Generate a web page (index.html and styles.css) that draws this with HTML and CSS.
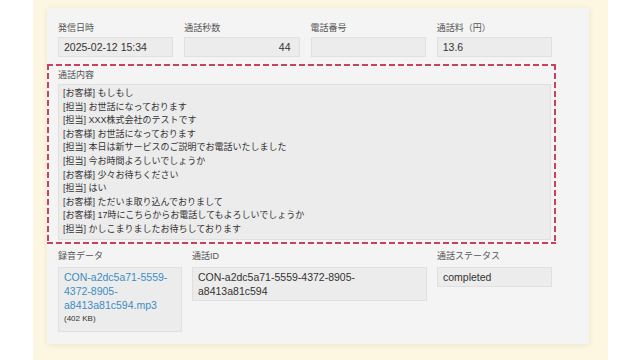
FILE: index.html
```html
<!DOCTYPE html>
<html lang="ja">
<head>
    <meta charset="UTF-8">
    <title>通話詳細</title>
    <link rel="stylesheet" href="styles.css">
</head>
<body>
    <div class="frame">
        <div class="card">
            <div class="row row-top">
                <div class="field">
                    <div class="label">発信日時</div>
                    <div class="value">2025-02-12 15:34</div>
                </div>
                <div class="field">
                    <div class="label">通話秒数</div>
                    <div class="value num">44</div>
                </div>
                <div class="field">
                    <div class="label">電話番号</div>
                    <div class="value"></div>
                </div>
                <div class="field">
                    <div class="label">通話料（円）</div>
                    <div class="value">13.6</div>
                </div>
            </div>

            <div class="highlight">
                <div class="label">通話内容</div>
                <div class="transcript">
                    <div>[お客様] もしもし</div>
                    <div>[担当] お世話になっております</div>
                    <div>[担当] XXX株式会社のテストです</div>
                    <div>[お客様] お世話になっております</div>
                    <div>[担当] 本日は新サービスのご説明でお電話いたしました</div>
                    <div>[担当] 今お時間よろしいでしょうか</div>
                    <div>[お客様] 少々お待ちください</div>
                    <div>[担当] はい</div>
                    <div>[お客様] ただいま取り込んでおりまして</div>
                    <div>[お客様] 17時にこちらからお電話してもよろしいでしょうか</div>
                    <div>[担当] かしこまりましたお待ちしております</div>
                </div>
            </div>

            <div class="row row-bottom">
                <div class="field">
                    <div class="label">録音データ</div>
                    <div class="value multi">
                        <a href="#" class="file-link">CON-a2dc5a71-5559-4372-8905-a8413a81c594.mp3</a>
                        <div class="file-size">(402 KB)</div>
                    </div>
                </div>
                <div class="field">
                    <div class="label">通話ID</div>
                    <div class="value multi">CON-a2dc5a71-5559-4372-8905-a8413a81c594</div>
                </div>
                <div class="field">
                    <div class="label">通話ステータス</div>
                    <div class="value multi">completed</div>
                </div>
            </div>
        </div>
    </div>
</body>
</html>
```

FILE: styles.css
```css
body {
    margin: 0;
    background-color: #fff;
    font-family: "Liberation Sans", "Noto Sans CJK JP", sans-serif;
    color: #333;
    overflow: hidden;
}
.frame {
    margin-left: 33px;
    width: 575px;
    height: 360px;
    box-sizing: border-box;
    padding: 8px 0 0 14px;
    background-color: #fdf6e1;
}
.card {
    width: 542px;
    height: 336px;
    box-sizing: border-box;
    padding: 14px 33px 0 11px;
    background-color: #f4f4f4;
    box-shadow: 0 1px 6px rgba(0,0,0,0.08);
}
.row {
    display: grid;
    width: 494px;
    column-gap: 10px;
}
.row-top {
    grid-template-columns: repeat(4, 1fr);
    column-gap: 11px;
}
.row-bottom {
    grid-template-columns: 124px 235px 1fr;
    margin-top: 6px;
    align-items: start;
}
.label {
    font-size: 9px;
    line-height: 12px;
    color: #555;
    margin-bottom: 3px;
}
.row-bottom .label {
    margin-bottom: 5px;
}
.value {
    height: 20px;
    box-sizing: border-box;
    padding: 0 5px;
    background-color: #ececec;
    border: 1px solid #e0e0e0;
    font-size: 10.5px;
    line-height: 18px;
}
.value.num {
    text-align: right;
    padding-right: 8px;
}
.value.multi {
    height: auto;
    padding: 2px 5px;
    line-height: 14px;
}
.file-link {
    color: #3b8dc5;
    text-decoration: none;
}
.file-size {
    font-size: 8px;
    line-height: 11px;
    color: #333;
    margin-top: 1px;
    padding-bottom: 5px;
}
/* dashed frame drawn with gradients: 6px dash, 3px gap */
.highlight {
    margin: 7px 0 0 -11px;
    padding: 5px 5px 4px 11px;
    background:
        repeating-linear-gradient(90deg, #c5435e 0 6px, transparent 6px 9px) left top / 100% 2px no-repeat,
        repeating-linear-gradient(90deg, #c5435e 0 6px, transparent 6px 9px) left bottom / 100% 2px no-repeat,
        repeating-linear-gradient(180deg, #c5435e 0 6px, transparent 6px 9px) left top / 2px 100% no-repeat,
        repeating-linear-gradient(180deg, #c5435e 0 6px, transparent 6px 9px) right top / 2px 100% no-repeat;
}
.highlight .label {
    margin-bottom: 3px;
}
.transcript {
    background-color: #ececec;
    border: 1px solid #e0e0e0;
    padding: 2px 4px;
    font-size: 9px;
    line-height: 13.6px;
    color: #333;
}
```
